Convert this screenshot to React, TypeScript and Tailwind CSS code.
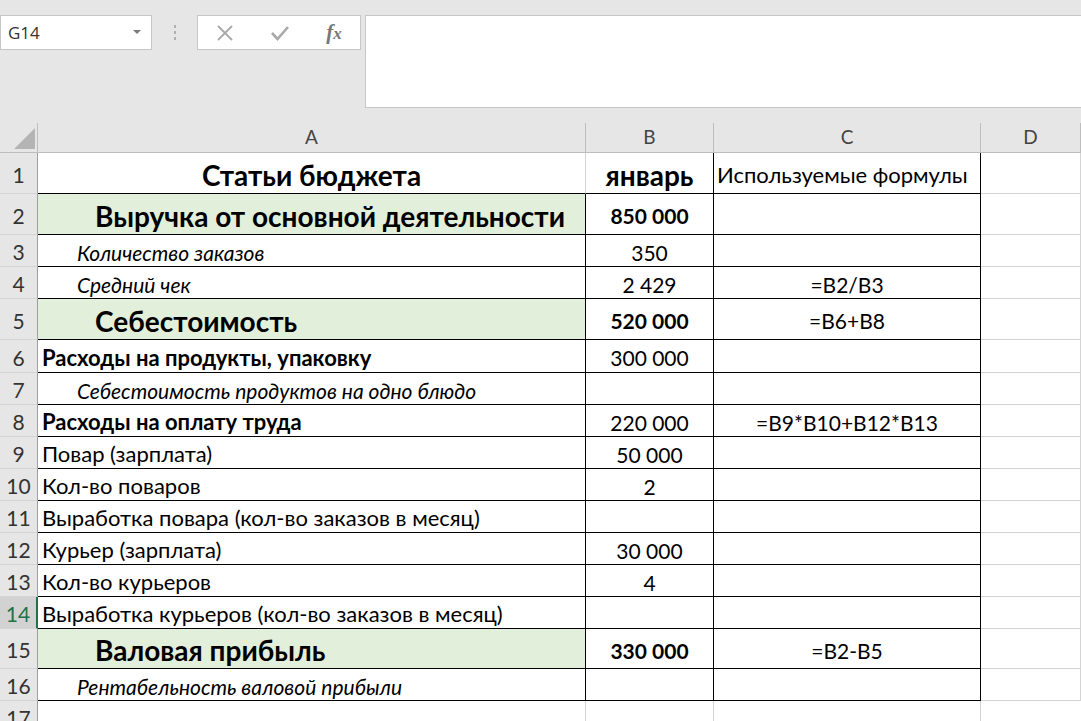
import React from "react";

type CellSpec = { t?: string; cls?: string; align?: "left" | "center" };
type RowSpec = { n: number; h: number; a?: CellSpec; b?: CellSpec; c?: CellSpec; green?: boolean; sel?: boolean };

const FONT = { fontFamily: "Lato, 'Noto Sans', sans-serif" } as const;

const H1 = "font-bold text-[28px] pl-[57px]";
const IT = "italic text-[21px] pl-[39px]";
const RB = "font-bold text-[22px] pl-[4px]";
const RG = "text-[22px] pl-[4px]";
const NB = "font-bold text-[21px]";

const rows: RowSpec[] = [
  { n: 1, h: 41, a: { t: "Статьи бюджета", cls: "font-bold text-[28px]", align: "center" }, b: { t: "январь", cls: "font-bold text-[28px]" }, c: { t: "Используемые формулы", align: "left", cls: "text-[22px]" } },
  { n: 2, h: 41, green: true, a: { t: "Выручка от основной деятельности", cls: H1 }, b: { t: "850 000", cls: NB } },
  { n: 3, h: 32, a: { t: "Количество заказов", cls: IT }, b: { t: "350" } },
  { n: 4, h: 32, a: { t: "Средний чек", cls: IT }, b: { t: "2 429" }, c: { t: "=B2/B3" } },
  { n: 5, h: 41, green: true, a: { t: "Себестоимость", cls: H1 }, b: { t: "520 000", cls: NB }, c: { t: "=B6+B8" } },
  { n: 6, h: 33, a: { t: "Расходы на продукты, упаковку", cls: RB }, b: { t: "300 000" } },
  { n: 7, h: 32, a: { t: "Себестоимость продуктов на одно блюдо", cls: IT } },
  { n: 8, h: 32, a: { t: "Расходы на оплату труда", cls: RB }, b: { t: "220 000" }, c: { t: "=B9*B10+B12*B13" } },
  { n: 9, h: 32, a: { t: "Повар (зарплата)", cls: RG }, b: { t: "50 000" } },
  { n: 10, h: 32, a: { t: "Кол-во поваров", cls: RG }, b: { t: "2" } },
  { n: 11, h: 32, a: { t: "Выработка повара (кол-во заказов в месяц)", cls: RG } },
  { n: 12, h: 32, a: { t: "Курьер (зарплата)", cls: RG }, b: { t: "30 000" } },
  { n: 13, h: 32, a: { t: "Кол-во курьеров", cls: RG }, b: { t: "4" } },
  { n: 14, h: 32, sel: true, a: { t: "Выработка курьеров (кол-во заказов в месяц)", cls: RG } },
  { n: 15, h: 40, green: true, a: { t: "Валовая прибыль", cls: H1 }, b: { t: "330 000", cls: NB }, c: { t: "=B2-B5" } },
  { n: 16, h: 32, a: { t: "Рентабельность валовой прибыли", cls: IT } },
];

function Txt({ spec, base }: { spec?: CellSpec; base: string }) {
  if (!spec || !spec.t) return null;
  const align = spec.align === "left" ? "justify-start pl-[3px]" : spec.align === "center" ? "justify-center" : "";
  return (
    <div className={`flex h-full items-center pt-[3px] whitespace-nowrap leading-none text-black ${base} ${align} ${spec.cls ?? ""}`}>
      {spec.t}
    </div>
  );
}

export default function App() {
  return (
    <div className="w-[1081px] h-[721px] overflow-hidden bg-[#e6e6e6]" style={FONT}>
      {/* Formula bar area */}
      <div className="h-[123px]">
        <div className="flex items-start pt-[15px]">
          {/* Name box */}
          <div className="w-[152px] h-[35px] bg-white border border-[#c6c6c6] flex items-center justify-between pl-[7px] pr-[10px]">
            <span className="text-[17px] text-[#333]" style={{ fontFamily: "'Open Sans', 'Noto Sans', sans-serif" }}>G14</span>
            <svg width="8" height="5" viewBox="0 0 8 5"><path d="M0 0 L8 0 L4 4 Z" fill="#7a7a7a" /></svg>
          </div>
          {/* dots */}
          <div className="w-[45px] h-[35px] flex flex-col items-center justify-center gap-[3px]">
            <div className="w-[2px] h-[3px] bg-[#b0b0b0]" />
            <div className="w-[2px] h-[3px] bg-[#b0b0b0]" />
            <div className="w-[2px] h-[3px] bg-[#b0b0b0]" />
          </div>
          {/* buttons */}
          <div className="w-[164px] h-[35px] bg-white border border-[#c6c6c6] flex items-center">
            <div className="w-[54px] flex justify-center">
              <svg width="18" height="18" viewBox="0 0 18 18"><path d="M2 2 L16 16 M16 2 L2 16" stroke="#a9a9a9" strokeWidth="1.8" /></svg>
            </div>
            <div className="w-[56px] flex justify-center">
              <svg width="20" height="18" viewBox="0 0 20 18"><path d="M2 9 L7.5 15 L18 3" stroke="#a9a9a9" strokeWidth="2.6" fill="none" /></svg>
            </div>
            <div className="w-[52px] flex justify-center">
              <span className="italic font-bold text-[21px] text-[#777] leading-none" style={{ fontFamily: "'Liberation Serif', serif" }}>
                f<span className="text-[17px]">x</span>
              </span>
            </div>
          </div>
          {/* formula input */}
          <div className="ml-[4px] flex-1 h-[93px] bg-white border border-[#c6c6c6] border-r-0" />
        </div>
      </div>

      {/* Sheet */}
      <div className="grid grid-cols-[38px_548px_128px_267px_1fr] bg-white">
        {/* header row */}
        <div className="h-[30px] bg-[#e6e6e6] border-r border-b border-[#bdbdbd] relative">
          <svg className="absolute left-[14px] top-[5px]" width="22" height="22" viewBox="0 0 22 22"><path d="M21 0 L21 21 L0 21 Z" fill="#b4b4b4" /></svg>
        </div>
        {["A", "B", "C", "D"].map((l) => (
          <div key={l} className="h-[30px] bg-[#e6e6e6] border-r border-b border-[#bdbdbd] flex items-center justify-center text-[19px] text-[#444]">
            {l}
          </div>
        ))}

        {rows.map((r) => (
          <React.Fragment key={r.n}>
            <div
              style={{ height: r.h }}
              className={`flex items-center justify-center pt-[3px] text-[21px] border-b ${
                r.sel
                  ? "bg-[#d2d2d2] text-[#217346] border-r-2 border-r-[#217346] border-b-[#d4d4d4]"
                  : "bg-[#e6e6e6] text-[#333] border-r border-r-[#9e9e9e] border-b-[#d4d4d4]"
              }`}
            >
              {r.n}
            </div>
            <div
              style={{ height: r.h }}
              className={`border-b border-b-black border-r ${r.n === 1 ? "border-r-[#d4d4d4]" : "border-r-black"} ${r.green ? "bg-[#e2efda]" : "bg-white"}`}
            >
              <Txt spec={r.a} base="" />
            </div>
            <div style={{ height: r.h }} className="border-b border-r border-black bg-white">
              <Txt spec={r.b} base="justify-center text-[21px]" />
            </div>
            <div style={{ height: r.h }} className="border-b border-r border-black bg-white">
              <Txt spec={r.c} base="justify-center text-[21px]" />
            </div>
            <div style={{ height: r.h }} className="border-b border-r border-[#d4d4d4] bg-white" />
          </React.Fragment>
        ))}

        {/* row 17 */}
        <div className="h-[40px] bg-[#e6e6e6] text-[#333] border-r border-[#9e9e9e] flex items-start pt-[6px] justify-center text-[21px] leading-none">17</div>
        <div className="h-[40px] border-r border-[#d4d4d4]" />
        <div className="h-[40px] border-r border-[#d4d4d4]" />
        <div className="h-[40px] border-r border-[#d4d4d4]" />
        <div className="h-[40px]" />
      </div>
    </div>
  );
}
